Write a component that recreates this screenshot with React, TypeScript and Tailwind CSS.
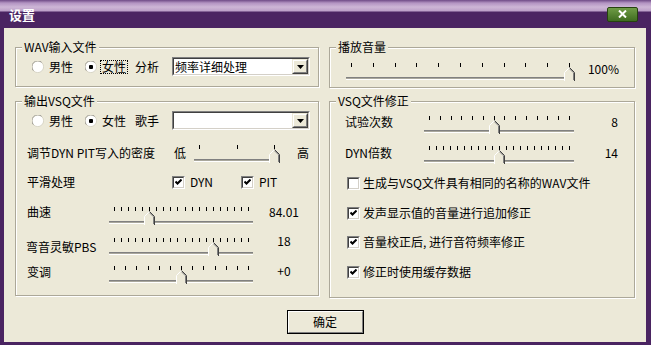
import React from "react";

function Radio({ checked }: { checked?: boolean }) {
  return (
    <svg width="12" height="12" viewBox="0 0 12 12" className="shrink-0">
      <circle cx="6" cy="6" r="5.5" fill="white" />
      <path d="M1.6 9.9 A5.5 5.5 0 0 1 9.9 1.6" stroke="#9c9a92" fill="none" />
      <path d="M9.9 1.6 A5.5 5.5 0 0 1 1.6 9.9" stroke="#d8d5c6" fill="none" />
      {checked && <rect x="4" y="4" width="4" height="4" rx="1" fill="black" />}
    </svg>
  );
}

function Checkbox({ checked }: { checked?: boolean }) {
  return (
    <div className="w-[13px] h-[13px] shrink-0 border border-t-[#808080] border-l-[#808080] border-b-white border-r-white">
      <div className="w-full h-full bg-white border border-t-[#404040] border-l-[#404040] border-b-[#d4d0c8] border-r-[#d4d0c8] flex items-center justify-center">
        {checked && (
          <svg width="7" height="7" viewBox="0 0 7 7">
            <path d="M0.5 2.5 L2.5 4.5 L6.5 0.5" stroke="black" strokeWidth="2" fill="none" />
          </svg>
        )}
      </div>
    </div>
  );
}

function Combo({ text }: { text?: string }) {
  return (
    <div className="w-[138px] h-[19px] flex border border-t-[#808080] border-l-[#808080] border-b-white border-r-white">
      <div className="flex-1 flex bg-white border border-t-[#404040] border-l-[#404040] border-b-[#d4d0c8] border-r-[#d4d0c8]">
        <span className="flex-1 pl-[1px] leading-[15px]">{text}</span>
        <div className="w-[16px] h-full border border-t-[#ECE9D8] border-l-[#ECE9D8] border-b-[#404040] border-r-[#404040]">
          <div className="w-full h-full bg-[#ECE9D8] border border-t-white border-l-white border-b-[#808080] border-r-[#808080] flex items-center justify-center">
            <svg width="7" height="4" viewBox="0 0 7 4">
              <path d="M0 0 H7 L3.5 4 Z" fill="black" />
            </svg>
          </div>
        </div>
      </div>
    </div>
  );
}

function Trackbar({ width, ticks, pos }: { width: number; ticks: number; pos: number }) {
  const step = (width - 10) / (ticks - 1);
  return (
    <div className="relative h-[18px] shrink-0" style={{ width }}>
      {Array.from({ length: ticks }).map((_, i) => (
        <span
          key={i}
          className="absolute top-0 h-[4px] w-[1px] bg-black"
          style={{ left: Math.round(5 + i * step) }}
        />
      ))}
      <div className="absolute left-0 right-0 top-[14px] h-[3px] border-t border-b border-t-[#808080] border-b-white bg-[#a9a79c]" />
      <svg
        className="absolute top-[4px]"
        style={{ left: Math.round(5 + pos * step) - 5 }}
        width="11"
        height="14"
        viewBox="0 0 11 14"
      >
        <path d="M5.5 0 L11 5.5 V14 H0 V5.5 Z" fill="#ECE9D8" />
        <path d="M0.5 14 V5.5 L5.5 0.5" stroke="white" fill="none" />
        <path d="M5.5 0.5 L10.5 5.5 V14" stroke="#404040" fill="none" />
        <path d="M5.5 1.8 L9.5 5.8 V13" stroke="#808080" fill="none" />
      </svg>
    </div>
  );
}

function Group({ title, className, children }: { title: string; className: string; children?: React.ReactNode }) {
  return (
    <div className={`relative shrink-0 border border-[#aca899] shadow-[inset_1px_1px_0_#fff,1px_1px_0_#fff] ${className}`}>
      <span className="absolute left-[6px] top-[-8px] bg-[#ECE9D8] px-[2px] leading-[14px]">{title}</span>
      {children}
    </div>
  );
}

export default function App() {
  return (
    <div className="w-[651px] h-[345px] bg-[#4a2461] flex flex-col overflow-hidden text-[12px] leading-[14px] text-black font-['Noto_Sans_CJK_SC',sans-serif]">
      <div className="h-[28px] shrink-0 flex items-center pl-[9px] bg-[linear-gradient(to_bottom,#6e4a86_0px,#b394c2_3px,#cdb6d6_7px,#bb9fc8_11px,#4b2462_12px,#4b2462_100%)]">
        <span className="pt-[2px] text-[13px] font-bold text-white leading-[14px]">设置</span>
        <div className="ml-auto mr-[13px] w-[31px] h-[15px] rounded-[2px] border border-[#26420f] bg-[linear-gradient(to_bottom,#6f9c46,#3f6c20)] flex items-center justify-center">
          <svg width="9" height="8" viewBox="0 0 9 8">
            <path d="M1 0.5 L8 7.5 M8 0.5 L1 7.5" stroke="white" strokeWidth="2" />
          </svg>
        </div>
      </div>

      <div className="ml-[4px] w-[642px] h-[314px] shrink-0 bg-[#ECE9D8] flex flex-col px-[11px] pt-[19px]">
        <div className="flex gap-[10px] items-start">
          <Group title="WAV输入文件" className="w-[304px] h-[40px]">
            <div className="mt-[9px] flex h-[19px] items-center pl-[16px]">
              <Radio />
              <span className="ml-[5px]">男性</span>
              <span className="ml-[12px]">
                <Radio checked />
              </span>
              <span className="ml-[3px] border border-dotted border-black px-[1px] leading-[12px]">女性</span>
              <span className="ml-[7px]">分析</span>
              <div className="ml-[13px]">
                <Combo text="频率详细处理" />
              </div>
            </div>
          </Group>
          <Group title="播放音量" className="w-[306px] h-[41px]">
            <div className="mt-[14px] flex items-start pl-[16px]">
              <div className="mt-[1px]">
                <Trackbar width={228} ticks={11} pos={10} />
              </div>
              <span className="w-[45px] text-right">100%</span>
            </div>
          </Group>
        </div>

        <div className="mt-[13px] flex gap-[10px] items-start">
          <Group title="输出VSQ文件" className="w-[304px] h-[195px]">
            <div className="mt-[9px] flex h-[19px] items-center pl-[16px]">
              <Radio />
              <span className="ml-[5px]">男性</span>
              <span className="ml-[12px]">
                <Radio checked />
              </span>
              <span className="ml-[5px]">女性</span>
              <span className="ml-[9px]">歌手</span>
              <div className="ml-[13px]">
                <Combo />
              </div>
            </div>

            <div className="mt-[15px] flex h-[18px] items-start pl-[11px]">
              <span className="w-[147px] mt-[1px]">调节DYN PIT写入的密度</span>
              <span className="w-[20px] mt-[1px]">低</span>
              <Trackbar width={85} ticks={3} pos={2} />
              <span className="ml-[18px] mt-[1px]">高</span>
            </div>

            <div className="mt-[12px] flex h-[14px] items-center pl-[11px]">
              <span className="w-[145px]">平滑处理</span>
              <div className="w-[69px] flex items-center">
                <Checkbox checked />
                <span className="ml-[5px]">DYN</span>
              </div>
              <Checkbox checked />
              <span className="ml-[5px]">PIT</span>
            </div>

            <div className="mt-[16px] flex h-[20px] items-start pl-[11px]">
              <span className="w-[82px]">曲速</span>
              <div className="mt-[2px]">
                <Trackbar width={144} ticks={20} pos={5} />
              </div>
              <span className="ml-[9px] w-[44px] text-center">84.01</span>
            </div>

            <div className="mt-[9px] flex h-[22px] items-start pl-[10px]">
              <span className="w-[83px] mt-[6px]">弯音灵敏PBS</span>
              <div className="mt-[4px]">
                <Trackbar width={144} ticks={20} pos={14} />
              </div>
              <span className="ml-[9px] w-[44px] text-center">18</span>
            </div>

            <div className="mt-[8px] flex h-[20px] items-start pl-[11px]">
              <span className="w-[82px] mt-[1px]">变调</span>
              <div className="mt-[2px]">
                <Trackbar width={144} ticks={13} pos={6} />
              </div>
              <span className="ml-[9px] w-[44px] text-center">+0</span>
            </div>
          </Group>

          <Group title="VSQ文件修正" className="w-[306px] h-[197px]">
            <div className="mt-[13px] flex h-[19px] items-start pl-[15px]">
              <span className="w-[79px]">试验次数</span>
              <div className="mt-[1px]">
                <Trackbar width={150} ticks={14} pos={6} />
              </div>
              <span className="w-[44px] text-right">8</span>
            </div>

            <div className="mt-[12px] flex h-[18px] items-start pl-[15px]">
              <span className="w-[79px]">DYN倍数</span>
              <Trackbar width={150} ticks={21} pos={10} />
              <span className="w-[44px] text-right">14</span>
            </div>

            <div className="mt-[12px] flex h-[14px] items-center gap-[3px] pl-[17px]">
              <Checkbox />
              <span>生成与VSQ文件具有相同的名称的WAV文件</span>
            </div>
            <div className="mt-[16px] flex h-[14px] items-center gap-[3px] pl-[17px]">
              <Checkbox checked />
              <span>发声显示值的音量进行追加修正</span>
            </div>
            <div className="mt-[15px] flex h-[14px] items-center gap-[3px] pl-[17px]">
              <Checkbox checked />
              <span>音量校正后, 进行音符频率修正</span>
            </div>
            <div className="mt-[16px] flex h-[14px] items-center gap-[3px] pl-[17px]">
              <Checkbox checked />
              <span>修正时使用缓存数据</span>
            </div>
          </Group>
        </div>

        <button className="mt-[12px] self-center w-[77px] h-[24px] border border-black bg-[#ECE9D8]">
          <div className="w-full h-full border border-t-white border-l-white border-b-[#808080] border-r-[#808080] flex items-center justify-center">
            确定
          </div>
        </button>
      </div>
    </div>
  );
}
